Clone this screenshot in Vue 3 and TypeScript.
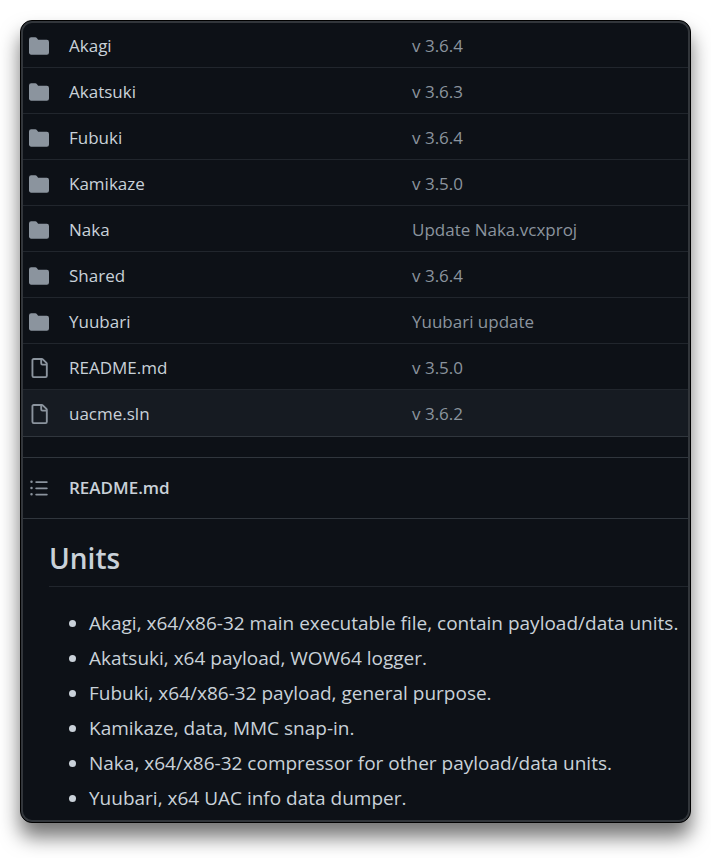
<script setup lang="ts">
interface Entry {
  name: string
  message: string
  kind: 'folder' | 'file'
  active?: boolean
}

const entries: Entry[] = [
  { name: 'Akagi', message: 'v 3.6.4', kind: 'folder' },
  { name: 'Akatsuki', message: 'v 3.6.3', kind: 'folder' },
  { name: 'Fubuki', message: 'v 3.6.4', kind: 'folder' },
  { name: 'Kamikaze', message: 'v 3.5.0', kind: 'folder' },
  { name: 'Naka', message: 'Update Naka.vcxproj', kind: 'folder' },
  { name: 'Shared', message: 'v 3.6.4', kind: 'folder' },
  { name: 'Yuubari', message: 'Yuubari update', kind: 'folder' },
  { name: 'README.md', message: 'v 3.5.0', kind: 'file' },
  { name: 'uacme.sln', message: 'v 3.6.2', kind: 'file', active: true },
]

const units: string[] = [
  'Akagi, x64/x86-32 main executable file, contain payload/data units.',
  'Akatsuki, x64 payload, WOW64 logger.',
  'Fubuki, x64/x86-32 payload, general purpose.',
  'Kamikaze, data, MMC snap-in.',
  'Naka, x64/x86-32 compressor for other payload/data units.',
  'Yuubari, x64 UAC info data dumper.',
]

const iconPaths: Record<Entry['kind'], string> = {
  folder:
    'M1.75 1A1.75 1.75 0 0 0 0 2.75v10.5C0 14.216.784 15 1.75 15h12.5A1.75 1.75 0 0 0 16 13.25v-8.5A1.75 1.75 0 0 0 14.25 3H7.5a.25.25 0 0 1-.2-.1l-.9-1.2C6.07 1.26 5.55 1 5 1H1.75Z',
  file: 'M2 1.75C2 .784 2.784 0 3.75 0h6.586c.464 0 .909.184 1.237.513l2.914 2.914c.329.328.513.773.513 1.237v9.586A1.75 1.75 0 0 1 13.25 16h-9.5A1.75 1.75 0 0 1 2 14.25Zm1.75-.25a.25.25 0 0 0-.25.25v12.5c0 .138.112.25.25.25h9.5a.25.25 0 0 0 .25-.25V6h-2.75A1.75 1.75 0 0 1 9 4.25V1.5Zm6.75.062V4.25c0 .138.112.25.25.25h2.688l-.011-.013-2.914-2.914-.013-.011Z',
}
</script>

<template>
  <main class="card">
    <table class="files">
      <tbody>
        <tr v-for="entry in entries" :key="entry.name" :class="{ active: entry.active }">
          <td class="icon-cell">
            <svg class="icon" viewBox="0 0 16 16" aria-hidden="true">
              <path :d="iconPaths[entry.kind]" />
            </svg>
          </td>
          <td class="name-cell"><a href="#">{{ entry.name }}</a></td>
          <td class="message-cell"><a href="#">{{ entry.message }}</a></td>
        </tr>
      </tbody>
    </table>
    <section class="readme">
      <header class="readme-header">
        <button class="toc" type="button" aria-label="Table of contents">
          <svg class="icon" viewBox="0 0 16 16" aria-hidden="true">
            <path
              d="M5.75 2.5h8.5a.75.75 0 0 1 0 1.5h-8.5a.75.75 0 0 1 0-1.5Zm0 5h8.5a.75.75 0 0 1 0 1.5h-8.5a.75.75 0 0 1 0-1.5Zm0 5h8.5a.75.75 0 0 1 0 1.5h-8.5a.75.75 0 0 1 0-1.5ZM2 14a1 1 0 1 1 0-2 1 1 0 0 1 0 2Zm1-6a1 1 0 1 1-2 0 1 1 0 0 1 2 0ZM2 4a1 1 0 1 1 0-2 1 1 0 0 1 0 2Z"
            />
          </svg>
        </button>
        <a class="readme-title" href="#">README.md</a>
      </header>
      <article class="readme-body">
        <h2>Units</h2>
        <ul>
          <li v-for="unit in units" :key="unit">{{ unit }}</li>
        </ul>
      </article>
    </section>
  </main>
</template>

<style>
body {
  background: #fff;
}
</style>

<style scoped>
.card {
  position: relative;
  margin: 20px 20px 35px;
  padding: 1px 0 9px;
  overflow: hidden;
  border: 1px solid #000;
  border-radius: 12px;
  background: #0d1117;
  box-shadow: 0 14px 20px rgba(0, 0, 0, 0.55);
  color: #c9d1d9;
  font-family: "Segoe UI", "Open Sans", "Noto Sans", sans-serif;
  font-size: 17px;
  line-height: 26px;
}

/* Inner rim drawn over the row dividers */
.card::after {
  content: "";
  position: absolute;
  inset: 0;
  border: 2px solid #32363b;
  border-radius: 11px;
  pointer-events: none;
}

a {
  color: inherit;
  text-decoration: none;
}

.files {
  width: 100%;
  border-collapse: separate;
  border-spacing: 0;
  table-layout: fixed;
}

td {
  box-sizing: border-box;
  height: 46px;
  padding: 2px 0 0;
  border-bottom: 1px solid #21262d;
  vertical-align: middle;
}

.active td {
  height: 47px;
  border-bottom-color: #30363d;
  background: #161b22;
}

.icon-cell {
  width: 48px;
  padding-left: 8px;
}

.name-cell {
  width: 343px;
}

.message-cell {
  color: #8b949e;
}

.icon {
  display: block;
  width: 20px;
  height: 20px;
  fill: #8b949e;
}

.readme {
  margin-top: 20px;
  border-top: 1px solid #30363d;
}

.readme-header {
  display: flex;
  align-items: center;
  gap: 20px;
  height: 60px;
  padding-left: 8px;
  border-bottom: 1px solid #30363d;
}

.toc {
  padding: 0;
  border: 0;
  background: none;
}

.readme-title {
  font-weight: 600;
}

.readme-body {
  padding: 20px 0 0 28px;
  font-size: 19px;
  line-height: 30px;
}

h2 {
  margin: 0 0 21px;
  padding-bottom: 9px;
  border-bottom: 1px solid #21262d;
  font-size: 28px;
  font-weight: 600;
  line-height: 38px;
}

ul {
  margin: 0;
  padding-left: 40px;
}

li + li {
  margin-top: 5px;
}
</style>
